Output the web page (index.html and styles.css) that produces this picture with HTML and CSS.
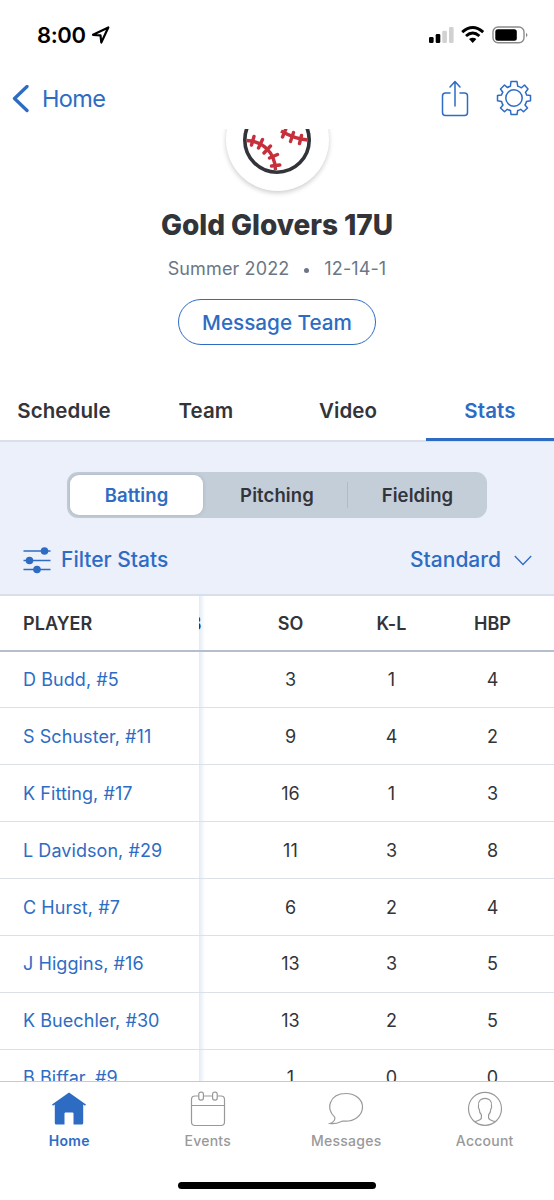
FILE: index.html
```html
<!DOCTYPE html>
<html lang="en">
<head>
<meta charset="utf-8">
<meta name="viewport" content="width=device-width">
<title>Gold Glovers 17U</title>
<link rel="stylesheet" href="styles.css">
</head>
<body>
<div class="app">
  <header class="status">
    <div class="clock"><span class="time">8:00</span>
      <svg class="loc" width="20" height="20" viewBox="0 0 20 20"><path d="M2 9.8 17.3 2.5 10.300 17.500 9.500 10.300Z" fill="none" stroke="#000" stroke-width="2.200" stroke-linejoin="round"/></svg>
    </div>
    <svg class="indicators" width="100" height="20" viewBox="0 0 100 20">
      <rect x="1" y="12" width="4.6" height="6" rx="1.3"/><rect x="7.7" y="9" width="4.6" height="9" rx="1.3"/>
      <rect x="14.3" y="5.8" width="4.6" height="12.2" rx="1.3" fill="#d1d1d1"/><rect x="21" y="2" width="4.6" height="16" rx="1.3" fill="#d1d1d1"/>
      <g fill="none" stroke="#000" stroke-width="2.9"><path d="M34.2 7.1Q44.7-2.2 55.2 7.1"/><path d="M38 11Q44.700 5 51.400 11"/></g>
      <path d="M41 14.100Q44.700 11.200 48.400 14.100L44.700 18Z"/>
      <rect x="65" y="2" width="31" height="15.800" rx="5" fill="none" stroke="#8b8b8b" stroke-width="1.4"/>
      <rect x="67.300" y="4.200" width="21.500" height="11.500" rx="2.500"/><path d="M98 7.700Q101 10 98 12.200Z" fill="#8b8b8b"/>
    </svg>
  </header>
  <nav class="nav">
    <a class="back"><svg width="18" height="28" viewBox="0 0 18 28"><path d="M15 1.500 2.500 13.500 15 25.500" fill="none" stroke="currentColor" stroke-width="3.300" stroke-linecap="round" stroke-linejoin="round"/></svg><span>Home</span></a>
    <div class="actions">
      <svg width="28" height="38" viewBox="0 0 28 38"><g fill="none" stroke="currentColor" stroke-width="1.500" stroke-linecap="round" stroke-linejoin="round"><path d="M9 13H4.500Q1.500 13 1.500 16V32.500Q1.500 35.500 4.500 35.500H23.500Q26.500 35.500 26.500 32.500V16Q26.500 13 23.500 13H19M14 26V2M9 7 14 1.500 19 7"/></g></svg>
      <svg class="gear" width="36" height="36" viewBox="0 0 36 36"><g fill="none" stroke="currentColor" stroke-width="1.500" stroke-linejoin="round"><path d="M15 1.500H21L21.700 6.200Q23.800 6.700 25.500 7.800L28.500 5 32 9 29.500 12.300Q30.300 13.600 30.600 15L34.500 15.500V20.800L30.500 21.500Q30 23.500 29 25L31.500 28 27.500 31.800 24.700 29.300Q23.200 30.200 21.700 30.500L21 34.500H15L14.500 30.500Q12.800 30.100 11.300 29.300L8.500 31.800 4.500 28 7 25Q6 23.500 5.600 21.500L1.500 20.800V15.500L5.500 15Q5.900 13.500 6.800 12.300L4.500 9 8.500 5 11.500 7.600Q12.800 6.700 14.400 6.200Z"/><circle cx="18" cy="18" r="8.200"/></g></svg>
    </div>
  </nav>
  <section class="hero">
    <div class="crest"><div class="disc">
      <svg width="70" height="70" viewBox="0 0 70 70"><circle cx="35" cy="35" r="32.200" fill="#fff" stroke="#333439" stroke-width="3.600"/>
      <g fill="none" stroke="#c5303c" stroke-width="3.400" stroke-linecap="round"><path stroke-linecap="butt" d="M4.500 35.500C19 36 33 46 33.500 65M65.500 35Q53 34 39 26"/><path stroke-width="3.400" d="M12 31.500 9.500 40M20.500 34.500 16.500 43M28.500 41 22 48M35.500 49.500 27.500 53M37.800 60 29.500 61M59.500 30.500 57.500 38.500M51.500 27.500 48.500 36.500M44 23.500 40.500 32"/></g></svg>
    </div></div>
    <h1>Gold Glovers 17U</h1>
    <p class="record"><span>Summer 2022</span><i></i><span>12-14-1</span></p>
    <button class="message">Message Team</button>
  </section>
  <div class="tabs"><a>Schedule</a><a>Team</a><a>Video</a><a class="active">Stats</a></div>
  <section class="controls">
    <div class="segments"><span class="selected">Batting</span><span class="pitching">Pitching</span><span class="divided">Fielding</span></div>
    <div class="filters">
      <a class="filter"><svg width="28" height="27" viewBox="0 0 28 27"><path d="M.5 4H27.500M.5 13.500H27.500M.5 22.500H27.500" stroke="currentColor" stroke-width="1.500"/><g fill="currentColor"><circle cx="21.500" cy="4" r="3.800"/><circle cx="6.500" cy="13.500" r="3.800"/><circle cx="14" cy="22.500" r="3.800"/></g></svg><span>Filter Stats</span></a>
      <a class="standard"><span>Standard</span><svg width="18" height="11" viewBox="0 0 18 11"><path d="M.8 1 9 9.500 17.200 1" fill="none" stroke="currentColor" stroke-width="1.300"/></svg></a>
    </div>
  </section>
  <section class="table">
    <div class="players">
      <div class="head">PLAYER</div><a>D Budd, #5</a><a>S Schuster, #11</a><a>K Fitting, #17</a><a>L Davidson, #29</a><a>C Hurst, #7</a><a>J Higgins, #16</a><a>K Buechler, #30</a><a>B Biffar, #9</a>
    </div>
    <div class="stats">
      <div class="row head"><span>BB</span><span>SO</span><span>K-L</span><span>HBP</span></div>
      <div class="row"><span></span><span>3</span><span>1</span><span>4</span></div>
      <div class="row"><span></span><span>9</span><span>4</span><span>2</span></div>
      <div class="row"><span></span><span>16</span><span>1</span><span>3</span></div>
      <div class="row"><span></span><span>11</span><span>3</span><span>8</span></div>
      <div class="row"><span></span><span>6</span><span>2</span><span>4</span></div>
      <div class="row"><span></span><span>13</span><span>3</span><span>5</span></div>
      <div class="row"><span></span><span>13</span><span>2</span><span>5</span></div>
      <div class="row"><span></span><span>1</span><span>0</span><span>0</span></div>
    </div>
  </section>
  <footer class="bottom">
    <nav class="dock">
      <a class="active"><svg width="36" height="36" viewBox="0 0 36 36"><path d="M18 1.500 35 13.500 34 14.700 32.200 13.500V32Q32.200 33.500 30.700 33.500H22.500V22.500Q22.500 21.500 21.500 21.500H14.500Q13.500 21.500 13.500 22.500V33.500H5.300Q3.800 33.500 3.800 32V13.500L2 14.700 1 13.500Z" fill="currentColor"/></svg><span>Home</span></a>
      <a><svg width="36" height="36" viewBox="0 0 36 36"><g fill="#fff" stroke="currentColor" stroke-width="1.200"><rect x="1.500" y="5" width="33" height="29.500" rx="3.500"/><path d="M1.500 14.500H34.500"/><rect x="8.800" y="1.100" width="4.600" height="8" rx="2"/><rect x="22.600" y="1.100" width="4.600" height="8" rx="2"/></g></svg><span>Events</span></a>
      <a><svg width="36" height="36" viewBox="0 0 36 36"><path d="M6.700 26.100C-2.500 18.500 1 2.500 18 2.500C27.500 2.500 34.500 8.500 34.500 16C34.500 24.500 26 31.500 14.500 30C10.500 31.700 7 33.500 2 32.500C4.700 31.500 7.500 29 6.700 26.100Z" fill="none" stroke="currentColor" stroke-width="1.200"/></svg><span>Messages</span></a>
      <a><svg width="36" height="36" viewBox="0 0 36 36"><g fill="none" stroke="currentColor" stroke-width="1.200"><circle cx="18" cy="17.800" r="16.500"/><path d="M7.800 30.800C11 29.300 14.400 29.300 14.400 26.800V23.800C12.800 22.300 12.300 20.300 12.200 18.100Q11 17.300 11.500 14.800C10 4.800 26 4.800 24.500 14.800Q25 17.300 23.800 18.100C23.700 20.300 23.200 22.300 21.600 23.800V26.800C21.600 29.300 25 29.300 28.200 30.800"/></g></svg><span>Account</span></a>
    </nav>
    <div class="home-indicator"></div>
  </footer>
</div>
</body>
</html>
```
FILE: styles.css
```css
* { box-sizing: border-box; }
body { margin: 0; background: #fff; color: #333439; font-family: Inter, "Liberation Sans", sans-serif; }
svg { display: block; flex: none; }
.app { width: 554px; height: 1200px; overflow: hidden; display: flex; flex-direction: column; }
.status { height: 70px; padding: 0 26px 0 37px; display: flex; justify-content: space-between; align-items: center; color: #000; }
.clock { display: flex; align-items: center; gap: 5px; }
.time { font-size: 22px; font-weight: 600; letter-spacing: -.4px; line-height: 28px; }
.nav { height: 59px; padding: 0 22px 0 12px; display: flex; justify-content: space-between; align-items: flex-start; color: #2e6cc4; }
.back { display: flex; align-items: center; gap: 12px; padding-top: 14px; font-size: 23.500px; line-height: 29px; letter-spacing: -.6px; }
.actions { display: flex; align-items: center; gap: 27px; padding-top: 10px; }
.gear { margin-bottom: 2px; }
.hero { height: 251px; display: flex; flex-direction: column; align-items: center; }
.crest { width: 140px; height: 74px; overflow: hidden; display: flex; justify-content: center; align-items: flex-start; }
.disc { width: 103px; height: 103px; margin-top: -41px; flex: none; border-radius: 50%; background: #fff; box-shadow: 0 2px 5px #0003; display: flex; align-items: center; justify-content: center; }
h1 { margin: 4px 0 0; font-size: 28px; line-height: 36px; font-weight: 800; letter-spacing: -.05px; }
.record { margin: 12px 0 0; display: flex; align-items: center; color: #6a7785; font-size: 18px; line-height: 28px; letter-spacing: .12px; }
.record i { width: 5px; height: 5px; margin: 2px 15px 0; border-radius: 50%; background: #6a7785; }
.message { width: 198px; height: 46px; margin: 16px 0 0; border: 1.500px solid #2e6cc4; border-radius: 23px; background: #fff; color: #2e6cc4; font: 500 20.700px/28px Inter, sans-serif; padding: 1px 0 0; }
.tabs { height: 62px; display: grid; grid-template-columns: 128px 156px 128px 142px; border-bottom: 2px solid #dadfe9; text-align: center; font-size: 20.500px; font-weight: 600; line-height: 61px; letter-spacing: .1px; }
.tabs a { height: 61px; }
.tabs .active { margin-left: 14px; color: #2e6cc4; border-bottom: 3px solid #2e6cc4; }
.controls { height: 154px; padding: 30px 0 0; background: #ebf0fa; border-bottom: 2px solid #d9dfea; }
.segments { width: 420px; height: 46px; margin: 0 auto; padding: 3px; display: grid; grid-template-columns: 133px 144px 137px; align-items: center; border-radius: 11px; background: #c4ced9; text-align: center; font-size: 18.500px; font-weight: 600; line-height: 40px; letter-spacing: .1px; }
.selected { background: #fff; color: #2e6cc4; border-radius: 9px; box-shadow: 0 0 4px #0002; }
.pitching { padding-left: 4px; }
.divided { line-height: 26px; border-left: 1px solid #afbbc8; padding-left: 3px; }
.filters { display: flex; justify-content: space-between; align-items: center; padding: 27px 22px 0 23px; color: #2e6cc4; font-size: 21px; font-weight: 500; line-height: 30px; }
.filter, .standard { display: flex; align-items: center; gap: 10px; }
.standard { gap: 13px; }
.table { height: 485px; display: flex; overflow: hidden; font-size: 18px; letter-spacing: .06px; }
.players { width: 199px; background: #fff; color: #2e6cc4; }
.players > *, .row { display: flex; height: 56.900px; align-items: center; border-bottom: 1.500px solid #dbe1e7; }
.players > * { padding-left: 23px; }
.players > .head, .row.head { height: 55.500px; padding-top: 1px; color: #333439; font-weight: 600; border-bottom: 2px solid #b4bfce; }
.stats { width: 355px; overflow: hidden; background: linear-gradient(90deg, #e4eaf3, #fff 6px); }
.row { display: grid; width: 415px; margin-left: -60px; grid-template-columns: repeat(4, 101px); text-align: center; }
.bottom { height: 119px; border-top: 1px solid #c9c9cc; background: #fff; }
.dock { display: grid; grid-template-columns: repeat(4, 1fr); padding-top: 9px; color: #999; font-size: 14px; font-weight: 500; line-height: 20px; letter-spacing: .25px; }
.dock a { display: flex; flex-direction: column; align-items: center; gap: 4px; }
.dock .active { color: #2e6cc4; font-weight: 600; }
.home-indicator { width: 198px; height: 7px; margin: 31px auto 0; border-radius: 4px; background: #000; }
```
